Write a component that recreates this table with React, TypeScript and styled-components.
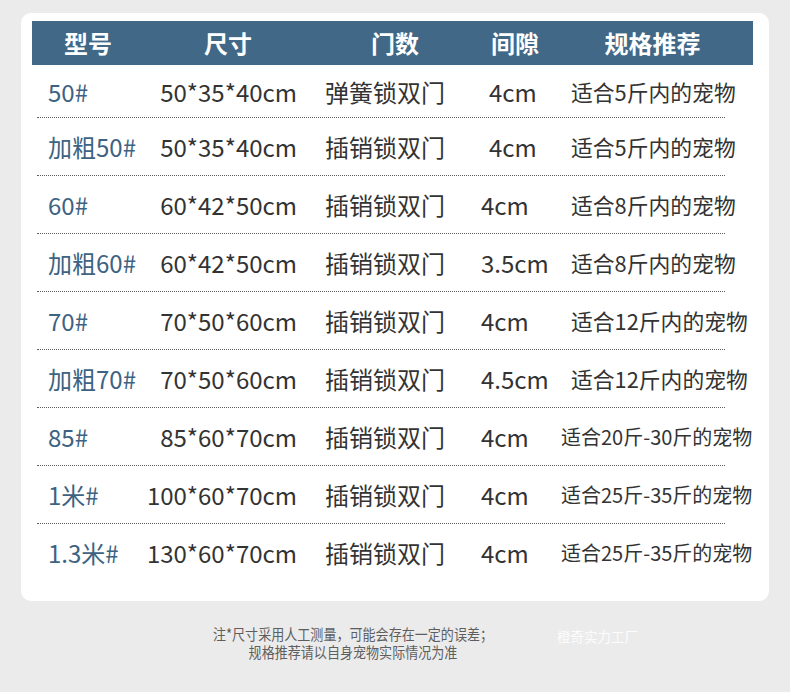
import React from "react";
import styled, { createGlobalStyle } from "styled-components";

const GlobalStyle = createGlobalStyle`
  body {
    margin: 0;
    background: #ebebeb;
    font-family: "Noto Sans CJK SC", "Noto Sans", sans-serif;
  }
`;

type Spec = {
  model: string;
  size: string;
  door: string;
  gap: string;
  gapShift?: boolean;
  spec: string;
  long?: boolean;
};

const rows: Spec[] = [
  { model: "50#", size: "50*35*40cm", door: "弹簧锁双门", gap: "4cm", gapShift: true, spec: "适合5斤内的宠物" },
  { model: "加粗50#", size: "50*35*40cm", door: "插销锁双门", gap: "4cm", gapShift: true, spec: "适合5斤内的宠物" },
  { model: "60#", size: "60*42*50cm", door: "插销锁双门", gap: "4cm", spec: "适合8斤内的宠物" },
  { model: "加粗60#", size: "60*42*50cm", door: "插销锁双门", gap: "3.5cm", spec: "适合8斤内的宠物" },
  { model: "70#", size: "70*50*60cm", door: "插销锁双门", gap: "4cm", spec: "适合12斤内的宠物" },
  { model: "加粗70#", size: "70*50*60cm", door: "插销锁双门", gap: "4.5cm", spec: "适合12斤内的宠物" },
  { model: "85#", size: "85*60*70cm", door: "插销锁双门", gap: "4cm", spec: "适合20斤-30斤的宠物", long: true },
  { model: "1米#", size: "100*60*70cm", door: "插销锁双门", gap: "4cm", spec: "适合25斤-35斤的宠物", long: true },
  { model: "1.3米#", size: "130*60*70cm", door: "插销锁双门", gap: "4cm", spec: "适合25斤-35斤的宠物", long: true },
];

const Page = styled.div`
  position: relative;
  width: 790px;
  height: 692px;
  padding: 13px 21px 0;
  box-sizing: border-box;
  background: #ebebeb;
`;

const Card = styled.div`
  width: 748px;
  height: 588px;
  box-sizing: border-box;
  padding: 8px 16px 0 11px;
  background: #fff;
  border-radius: 10px;
`;

const HeaderBar = styled.div`
  display: grid;
  grid-template-columns: 112px 168px 166px 74px 201px;
  height: 44px;
  align-items: center;
  background: #416987;
`;

const HeadCell = styled.div`
  text-align: center;
  color: #fff;
  font-size: 24px;
  font-weight: 700;
  line-height: 44px;
`;

const Row = styled.div<{ $first?: boolean }>`
  display: grid;
  grid-template-columns: 100px 165px 158px 100px 198px;
  align-items: center;
  height: ${(p) => (p.$first ? 52 : 57)}px;
  color: #333;
  white-space: nowrap;
`;

const Divider = styled.div`
  margin: 0 28px 0 5px;
  border-top: 1px dotted #5e5e5e;
`;

const Model = styled.div`
  padding-left: 16px;
  font-size: 24px;
  color: #3d6282;
`;

const Size = styled.div`
  text-align: right;
  font-size: 24px;
`;

const Door = styled.div`
  padding-left: 28px;
  font-size: 24px;
`;

const Gap = styled.div<{ $shift?: boolean }>`
  padding-left: ${(p) => (p.$shift ? 34 : 26)}px;
  font-size: 24px;
`;

const Recommend = styled.div<{ $long?: boolean }>`
  padding-left: ${(p) => (p.$long ? 6 : 16)}px;
  font-size: ${(p) => (p.$long ? 20 : 21.8)}px;
`;

const Note = styled.div`
  margin-top: 24px;
  width: 664px;
  text-align: center;
  color: #5e5e5e;
  font-size: 15px;
  transform: scaleX(0.87);
`;

const NoteLine = styled.div`
  height: 18px;
  line-height: 18px;
  white-space: nowrap;
`;

const Watermark = styled.div`
  position: absolute;
  left: 557px;
  top: 626px;
  color: #fcfcfc;
  font-size: 13.5px;
`;

export default function App() {
  return (
    <Page>
      <GlobalStyle />
      <Card>
        <HeaderBar>
          <HeadCell>型号</HeadCell>
          <HeadCell>尺寸</HeadCell>
          <HeadCell>门数</HeadCell>
          <HeadCell>间隙</HeadCell>
          <HeadCell>规格推荐</HeadCell>
        </HeaderBar>
        {rows.map((r, i) => (
          <React.Fragment key={r.model}>
            {i > 0 && <Divider />}
            <Row $first={i === 0}>
              <Model>{r.model}</Model>
              <Size>{r.size}</Size>
              <Door>{r.door}</Door>
              <Gap $shift={r.gapShift}>{r.gap}</Gap>
              <Recommend $long={r.long}>{r.spec}</Recommend>
            </Row>
          </React.Fragment>
        ))}
      </Card>
      <Note>
        <NoteLine>注*尺寸采用人工测量，可能会存在一定的误差；</NoteLine>
        <NoteLine>规格推荐请以自身宠物实际情况为准</NoteLine>
      </Note>
      <Watermark>橙奇实力工厂</Watermark>
    </Page>
  );
}
